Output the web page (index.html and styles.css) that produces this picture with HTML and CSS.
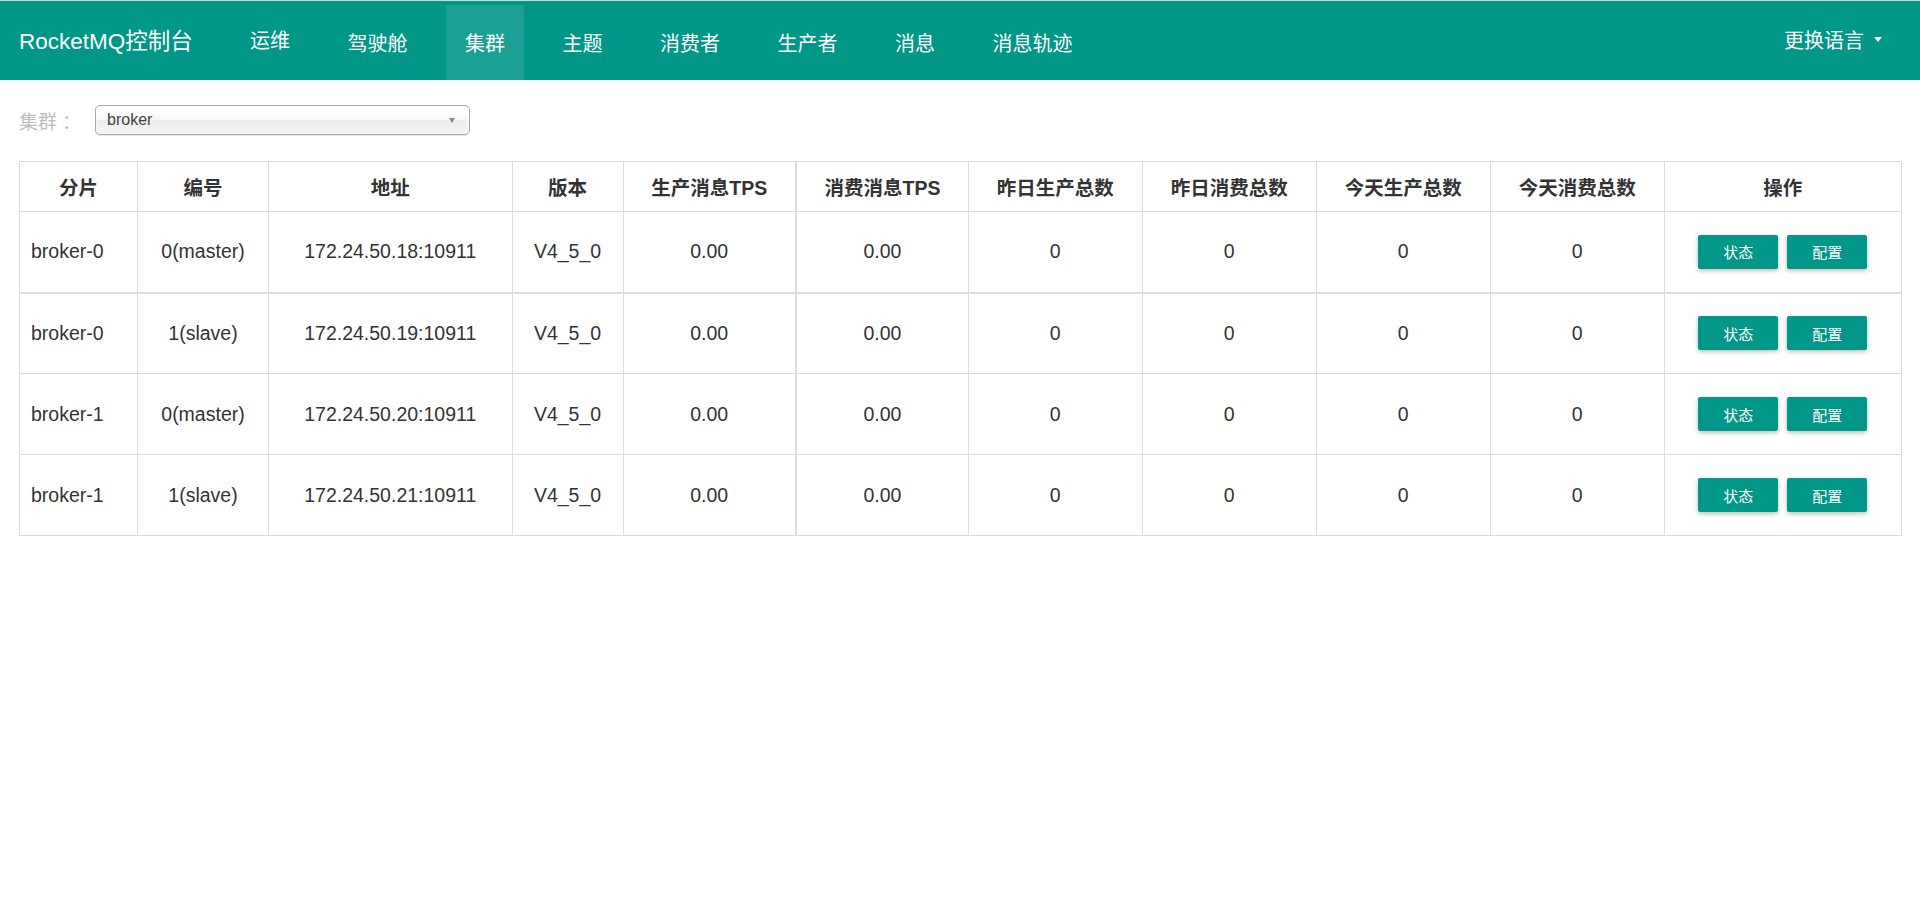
FILE: index.html
```html
<!DOCTYPE html>
<html lang="zh-CN">
<head>
<meta charset="utf-8">
<title>RocketMQ控制台</title>
<link rel="stylesheet" href="styles.css">
</head>
<body>
<nav class="navbar">
  <a class="brand" href="#">RocketMQ控制台</a>
  <ul class="nav-menu">
    <li><a class="nav-link raised" href="#">运维</a></li>
    <li><a class="nav-link" href="#">驾驶舱</a></li>
    <li><a class="nav-link active" href="#">集群</a></li>
    <li><a class="nav-link" href="#">主题</a></li>
    <li><a class="nav-link" href="#">消费者</a></li>
    <li><a class="nav-link" href="#">生产者</a></li>
    <li><a class="nav-link" href="#">消息</a></li>
    <li><a class="nav-link" href="#">消息轨迹</a></li>
  </ul>
  <a class="nav-link lang raised" href="#">更换语言<span class="caret"></span></a>
</nav>

<main class="container">
  <div class="filter-row">
    <label class="filter-label">集群<span class="colon">：</span></label>
    <div class="chosen-single">
      <span class="chosen-value">broker</span>
      <span class="chosen-arrow"></span>
    </div>
  </div>

  <table class="cluster-table">
    <colgroup>
      <col class="c1"><col class="c2"><col class="c3"><col class="c4"><col class="c5"><col class="c6">
      <col class="c7"><col class="c8"><col class="c9"><col class="c10"><col class="c11">
    </colgroup>
    <thead>
      <tr>
        <th>分片</th><th>编号</th><th>地址</th><th>版本</th><th>生产消息TPS</th><th class="thick">消费消息TPS</th>
        <th>昨日生产总数</th><th>昨日消费总数</th><th>今天生产总数</th><th>今天消费总数</th><th>操作</th>
      </tr>
    </thead>
    <tbody>
      <tr class="first-row">
        <td class="name">broker-0</td><td>0(master)</td><td>172.24.50.18:10911</td><td>V4_5_0</td><td>0.00</td><td class="thick">0.00</td>
        <td>0</td><td>0</td><td>0</td><td>0</td>
        <td><div class="ops"><button class="btn">状态</button><button class="btn">配置</button></div></td>
      </tr>
      <tr>
        <td class="name">broker-0</td><td>1(slave)</td><td>172.24.50.19:10911</td><td>V4_5_0</td><td>0.00</td><td class="thick">0.00</td>
        <td>0</td><td>0</td><td>0</td><td>0</td>
        <td><div class="ops"><button class="btn">状态</button><button class="btn">配置</button></div></td>
      </tr>
      <tr>
        <td class="name">broker-1</td><td>0(master)</td><td>172.24.50.20:10911</td><td>V4_5_0</td><td>0.00</td><td class="thick">0.00</td>
        <td>0</td><td>0</td><td>0</td><td>0</td>
        <td><div class="ops"><button class="btn">状态</button><button class="btn">配置</button></div></td>
      </tr>
      <tr>
        <td class="name">broker-1</td><td>1(slave)</td><td>172.24.50.21:10911</td><td>V4_5_0</td><td>0.00</td><td class="thick">0.00</td>
        <td>0</td><td>0</td><td>0</td><td>0</td>
        <td><div class="ops"><button class="btn">状态</button><button class="btn">配置</button></div></td>
      </tr>
    </tbody>
  </table>
</main>
</body>
</html>
```

FILE: styles.css
```css
* { box-sizing: border-box; }

html, body {
  margin: 0;
  padding: 0;
  background: #fff;
}

body {
  border-top: 1px solid #d3d3d3;
  font-family: "Liberation Sans", Arial, "Noto Sans CJK SC", sans-serif;
  color: #333;
}

/* ---------- navbar ---------- */
.navbar {
  display: flex;
  align-items: stretch;
  height: 79px;
  background: #009688;
}

.brand {
  display: flex;
  align-items: center;
  width: 231px;
  padding: 0 0 4px 19px;
  color: #fff;
  font-size: 22.5px;
  text-decoration: none;
  white-space: nowrap;
}

.nav-menu {
  display: flex;
  gap: 19.5px;
  margin: 0;
  padding: 0;
  list-style: none;
}

.nav-menu li {
  display: flex;
}

.nav-link {
  display: flex;
  align-items: center;
  margin-top: 4px;
  padding: 0 19px;
  color: #fff;
  font-size: 20px;
  text-decoration: none;
  white-space: nowrap;
}

.nav-link.raised {
  padding-bottom: 6px;
}

.nav-link.active {
  background: rgba(255, 255, 255, 0.1);
}

.nav-link.lang {
  margin-left: auto;
  margin-right: 19px;
}

.caret {
  display: inline-block;
  width: 0;
  height: 0;
  margin-left: 10px;
  border-top: 5px solid #fff;
  border-left: 4px solid transparent;
  border-right: 4px solid transparent;
}

/* ---------- content ---------- */
.container {
  padding: 25px 20px 0 19px;
}

.filter-row {
  display: flex;
  align-items: center;
}

.filter-label {
  width: 76px;
  color: #bdbdbd;
  font-size: 19px;
}

.colon {
  display: inline-block;
  margin-left: 5px;
}

.chosen-single {
  position: relative;
  display: flex;
  align-items: center;
  width: 375px;
  height: 30px;
  padding-left: 11px;
  border: 1px solid #aaa;
  border-radius: 5px;
  background: linear-gradient(#fff 20%, #f6f6f6 50%, #eee 52%, #f4f4f4 100%);
  box-shadow: 0 0 3px #fff inset, 0 1px 1px rgba(0, 0, 0, 0.1);
  color: #444;
  font-size: 16px;
}

.chosen-arrow {
  position: absolute;
  right: 14px;
  top: 12px;
  width: 0;
  height: 0;
  border-top: 5px solid #888;
  border-left: 3.5px solid transparent;
  border-right: 3.5px solid transparent;
}

/* ---------- table ---------- */
.cluster-table {
  width: 1881px;
  margin-top: 26px;
  border-collapse: collapse;
  table-layout: fixed;
  font-size: 19.5px;
  color: #333;
}

.c1 { width: 118px; }
.c2 { width: 131px; }
.c3 { width: 243.5px; }
.c4 { width: 111px; }
.c5 { width: 173px; }
.c6 { width: 172.5px; }
.c7 { width: 173.5px; }
.c8 { width: 174.5px; }
.c9 { width: 173.5px; }
.c10 { width: 174.5px; }
.c11 { width: 236.5px; }

.cluster-table th,
.cluster-table td {
  border: 1px solid #ddd;
  text-align: center;
  vertical-align: middle;
  padding: 0 10px;
  white-space: nowrap;
}

.cluster-table th {
  height: 50px;
  font-weight: bold;
}

.cluster-table td {
  height: 81px;
}

.cluster-table td.name {
  text-align: left;
  padding-left: 11px;
}

.cluster-table .thick {
  border-left: 2px solid #ddd;
}

.cluster-table .first-row td {
  border-bottom: 2px solid #ddd;
}

.ops {
  display: flex;
  justify-content: center;
  gap: 9px;
}

.btn {
  width: 80px;
  height: 34px;
  padding: 0;
  border: none;
  border-radius: 2px;
  background: #009688;
  color: #fff;
  font-family: "Noto Sans CJK SC", sans-serif;
  font-size: 15px;
  box-shadow: 0 2px 4px rgba(0, 0, 0, 0.18), 0 1px 6px rgba(0, 0, 0, 0.1);
}
```
